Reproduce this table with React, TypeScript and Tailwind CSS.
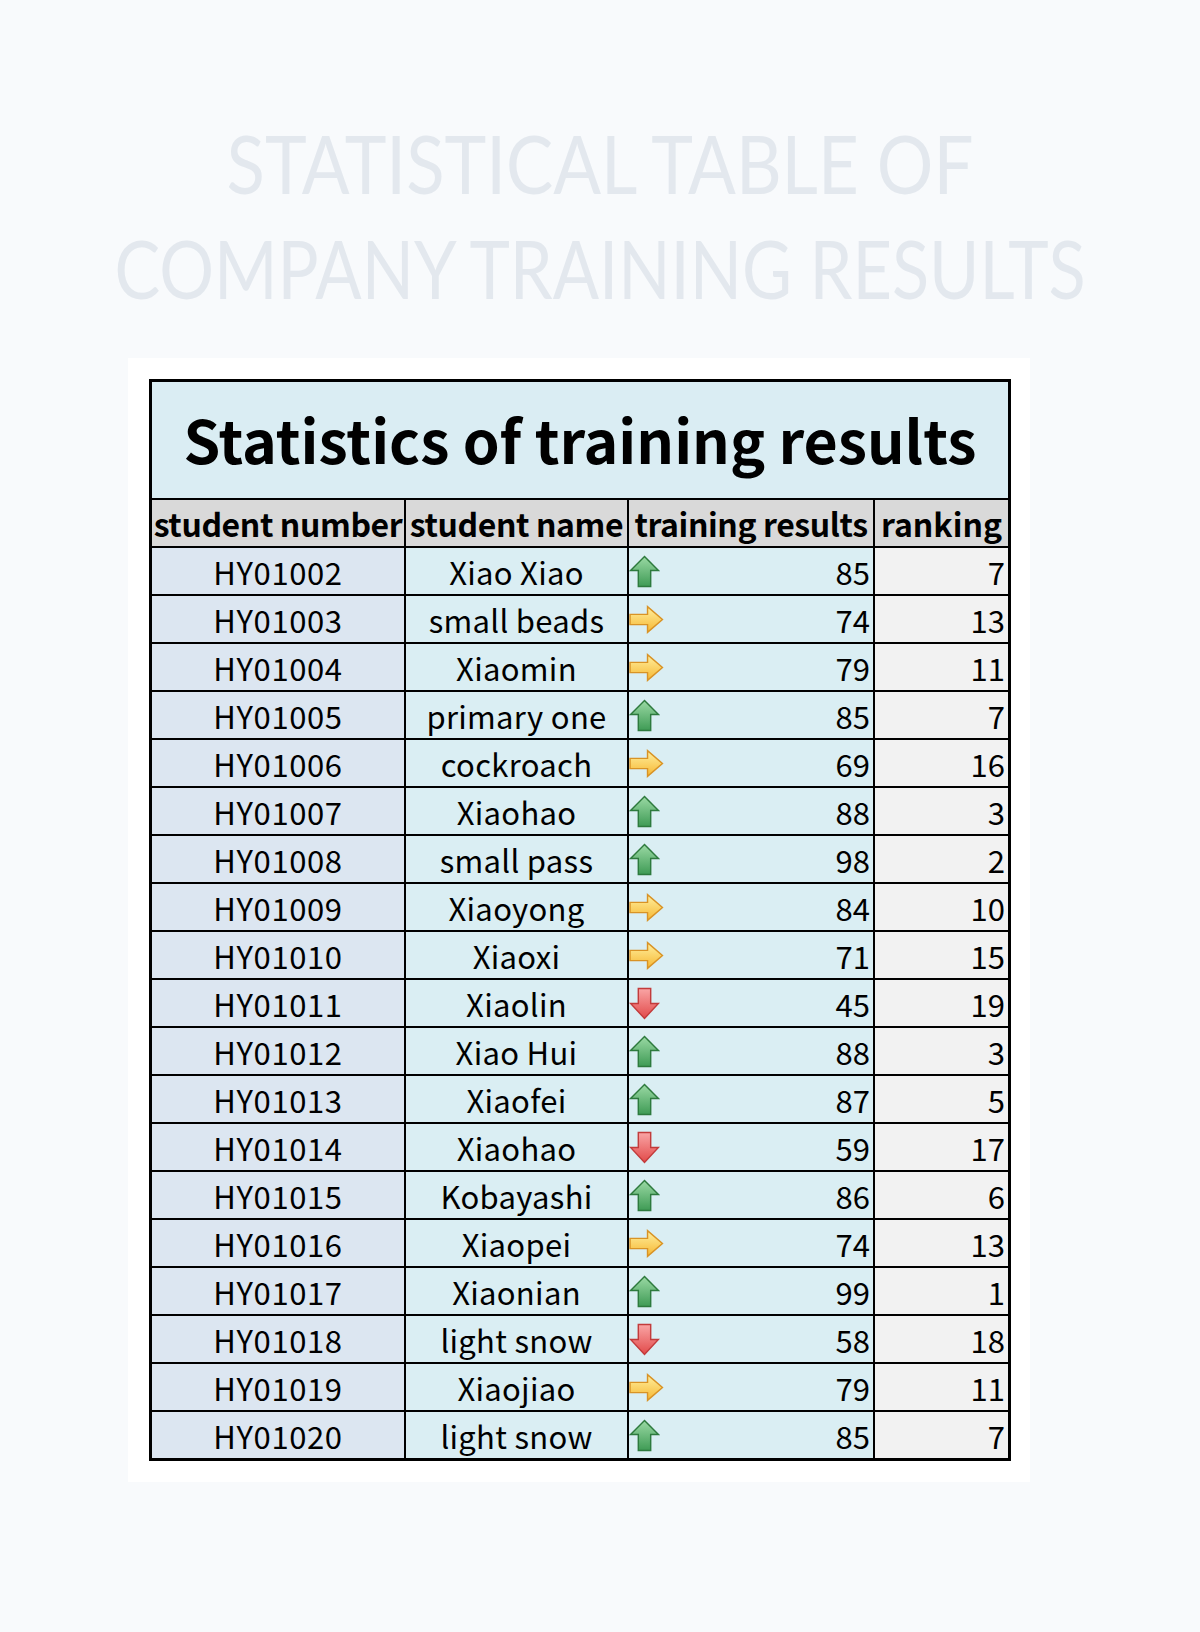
import React from "react";

type Trend = "up" | "right" | "down";
type Row = { id: string; name: string; trend: Trend; score: number; rank: number };

const rows: Row[] = [
  { id: "HY01002", name: "Xiao Xiao", trend: "up", score: 85, rank: 7 },
  { id: "HY01003", name: "small beads", trend: "right", score: 74, rank: 13 },
  { id: "HY01004", name: "Xiaomin", trend: "right", score: 79, rank: 11 },
  { id: "HY01005", name: "primary one", trend: "up", score: 85, rank: 7 },
  { id: "HY01006", name: "cockroach", trend: "right", score: 69, rank: 16 },
  { id: "HY01007", name: "Xiaohao", trend: "up", score: 88, rank: 3 },
  { id: "HY01008", name: "small pass", trend: "up", score: 98, rank: 2 },
  { id: "HY01009", name: "Xiaoyong", trend: "right", score: 84, rank: 10 },
  { id: "HY01010", name: "Xiaoxi", trend: "right", score: 71, rank: 15 },
  { id: "HY01011", name: "Xiaolin", trend: "down", score: 45, rank: 19 },
  { id: "HY01012", name: "Xiao Hui", trend: "up", score: 88, rank: 3 },
  { id: "HY01013", name: "Xiaofei", trend: "up", score: 87, rank: 5 },
  { id: "HY01014", name: "Xiaohao", trend: "down", score: 59, rank: 17 },
  { id: "HY01015", name: "Kobayashi", trend: "up", score: 86, rank: 6 },
  { id: "HY01016", name: "Xiaopei", trend: "right", score: 74, rank: 13 },
  { id: "HY01017", name: "Xiaonian", trend: "up", score: 99, rank: 1 },
  { id: "HY01018", name: "light snow", trend: "down", score: 58, rank: 18 },
  { id: "HY01019", name: "Xiaojiao", trend: "right", score: 79, rank: 11 },
  { id: "HY01020", name: "light snow", trend: "up", score: 85, rank: 7 },
];

function UpArrow() {
  return (
    <svg width="31" height="33" viewBox="0 0 30 32">
      <defs>
        <linearGradient id="gup" x1="0" y1="0" x2="0" y2="1">
          <stop offset="0" stopColor="#9ad9a4" />
          <stop offset="1" stopColor="#3f9b55" />
        </linearGradient>
      </defs>
      <polygon
        points="15,1.5 28.5,15 21,15 21,30.5 9,30.5 9,15 1.5,15"
        fill="url(#gup)"
        stroke="#2e7a3e"
        strokeWidth="1.4"
      />
    </svg>
  );
}

function RightArrow() {
  return (
    <svg width="35" height="29" viewBox="0 0 34 28">
      <defs>
        <linearGradient id="gright" x1="0" y1="0" x2="0" y2="1">
          <stop offset="0" stopColor="#fff0a0" />
          <stop offset="1" stopColor="#f6b732" />
        </linearGradient>
      </defs>
      <polygon
        points="1,9 18,9 18,1.5 32.5,14 18,26.5 18,19 1,19"
        fill="url(#gright)"
        stroke="#d99325"
        strokeWidth="1.4"
      />
    </svg>
  );
}

function DownArrow() {
  return (
    <svg width="31" height="33" viewBox="0 0 30 32">
      <defs>
        <linearGradient id="gdown" x1="0" y1="0" x2="0" y2="1">
          <stop offset="0" stopColor="#f9a5a5" />
          <stop offset="1" stopColor="#e24a4a" />
        </linearGradient>
      </defs>
      <polygon
        points="9,1.5 21,1.5 21,16 28.5,16 15,30.5 1.5,16 9,16"
        fill="url(#gdown)"
        stroke="#c23b3b"
        strokeWidth="1.4"
      />
    </svg>
  );
}

function TrendIcon({ t }: { t: Trend }) {
  if (t === "up") return <UpArrow />;
  if (t === "right") return <RightArrow />;
  return <DownArrow />;
}

const cjk = "font-['Noto_Sans_CJK_SC','Noto_Sans',sans-serif]";

export default function App() {
  return (
    <div className="w-[1200px] h-[1632px] bg-[#f8fafc] overflow-hidden">
      <div className="pt-[110px] h-[358px] text-center">
        <div className="font-['Lato','Open_Sans',sans-serif] font-normal text-[82px] leading-[105px] text-[#e3e8ee] whitespace-nowrap">
          <div className="scale-x-[0.862]">STATISTICAL TABLE OF</div>
          <div className="scale-x-[0.835]">COMPANY TRAINING RESULTS</div>
        </div>
      </div>
      <div className="ml-[128px] w-[902px] h-[1124px] bg-white p-[21px]">
        <div className={`w-[862px] border-[3px] border-black text-black ${cjk}`}>
          <div className="h-[118px] border-b-2 border-black bg-[#daedf3] flex items-center justify-center">
            <span className="text-[59px] font-bold leading-none whitespace-nowrap pb-[4px]">
              Statistics of training results
            </span>
          </div>
          <div className="grid grid-cols-[254px_223px_246px_133px] h-[48px] border-b-2 border-black bg-[#d9d9d9] text-[32px] font-bold leading-none">
            <div className="border-r-2 border-black flex items-center justify-center whitespace-nowrap overflow-hidden tracking-[-0.4px]">
              student number
            </div>
            <div className="border-r-2 border-black flex items-center justify-center whitespace-nowrap overflow-hidden tracking-[-0.4px]">
              student name
            </div>
            <div className="border-r-2 border-black flex items-center justify-center whitespace-nowrap overflow-hidden tracking-[-0.4px]">
              training results
            </div>
            <div className="flex items-center justify-center whitespace-nowrap">ranking</div>
          </div>
          {rows.map((r, i) => (
            <div
              key={r.id}
              className={`grid grid-cols-[254px_223px_246px_133px] text-[31px] leading-none ${
                i === rows.length - 1 ? "h-[46px]" : "h-[48px] border-b-2 border-black"
              }`}
            >
              <div className="border-r-2 border-black bg-[#dce6f1] flex items-center justify-center tracking-[0.6px]">
                {r.id}
              </div>
              <div className="border-r-2 border-black bg-[#daeef3] flex items-center justify-center whitespace-nowrap tracking-[0.3px]">
                {r.name}
              </div>
              <div className="border-r-2 border-black bg-[#daeef3] flex items-center justify-between pl-0 pr-[3px]">
                <TrendIcon t={r.trend} />
                <span>{r.score}</span>
              </div>
              <div className="bg-[#f2f2f2] flex items-center justify-end pr-[3px]">{r.rank}</div>
            </div>
          ))}
        </div>
      </div>
    </div>
  );
}
